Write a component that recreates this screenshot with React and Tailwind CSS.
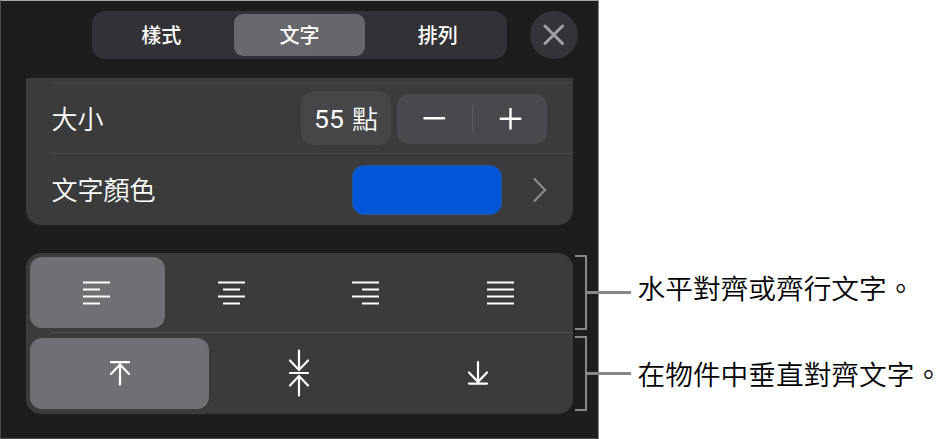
import React from "react";

const tabs = ["樣式", "文字", "排列"];

// x start / x end of each of the four lines
const alignments = [
  { id: "left", lines: [[0, 27], [0, 17], [0, 27], [0, 17]] },
  { id: "center", lines: [[0, 27], [5, 22], [0, 27], [5, 22]] },
  { id: "right", lines: [[0, 27], [10, 27], [0, 27], [10, 27]] },
  { id: "justify", lines: [[0, 27], [0, 27], [0, 27], [0, 27]] },
];

const verticals = [
  { id: "top", path: "M2 13.2H20 M11 15V35.4 M2 25L11 15.5L20 25" },
  {
    id: "middle",
    path: "M2 24H20 M11 1.5V21 M2 11.5L11 21L20 11.5 M11 27V46.5 M2 36.5L11 27L20 36.5",
  },
  { id: "bottom", path: "M2 34.6H20 M11 13V33 M2 23.5L11 32.8L20 23.5" },
];

const AlignIcon = ({ lines }) => (
  <svg className="mr-px" width="27" height="24" viewBox="0 0 27 24" fill="none" stroke="white" strokeWidth="2">
    {lines.map(([from, to], i) => (
      <path key={i} d={`M${from} ${1.5 + i * 7}H${to}`} />
    ))}
  </svg>
);

const Callout = ({ className, children }) => (
  <div className="flex items-center h-[75px]">
    <div className="h-[75px] w-[12px] border-y-[2.5px] border-r-[2.5px] border-[#878787]" />
    <div className="h-[2.5px] w-[44px] bg-[#878787]" />
    <span className={`ml-[6.5px] text-[27.7px] leading-[40px] text-black whitespace-nowrap ${className}`}>
      {children}
    </span>
  </div>
);

const App = () => {
  return (
    <div className="relative w-[947px] h-[439px] overflow-hidden bg-white font-['Noto_Sans_CJK_TC',sans-serif] font-[350]">
      <div className="w-[599px] h-[439px] bg-[#1d1d1e] border border-t-[#a2a7a7] border-l-[#4c4c4d] border-r-[#858585] border-b-[#4c4c4d] text-white">
        {/* Tabs and close button */}
        <div className="flex items-center pl-[91px] pt-[10px]">
          <div className="grid grid-cols-3 items-center w-[415px] h-[48px] rounded-[13px] bg-[#323135]">
            {tabs.map((tab) => (
              <button
                key={tab}
                className={`mx-[3.5px] h-[42px] pb-[2px] text-[20px] font-medium leading-[39px] rounded-[9px] ${
                  tab === "文字" ? "bg-linear-to-r from-[#69686d] to-[#66666b]" : ""
                }`}
              >
                {tab}
              </button>
            ))}
          </div>
          <button className="ml-[23px] flex items-center justify-center size-[48px] rounded-full bg-[#343337]">
            <svg width="22" height="22" viewBox="0 0 22 22" stroke="#a1a0a7" strokeWidth="3" strokeLinecap="round">
              <path d="M2 2L19.5 19.5M19.5 2L2 19.5" />
            </svg>
          </button>
        </div>

        {/* Size and colour */}
        <div className="ml-[25px] mt-[19px] w-[547px] h-[147px] rounded-b-[15px] bg-[#3b3b3c] pt-[4px]">
          <div className="ml-[25px] h-[71px] flex items-center border-t border-[#464647] text-[26px]">
            <span className="flex-1 pl-[0.5px] leading-none">大小</span>
            <div className="flex items-center justify-center gap-[8px] w-[90px] h-[54px] rounded-[13px] bg-[#464648] leading-none">
              <span className="font-[Roboto] font-normal text-[26.5px] pt-[2px]">55</span>
              <span>點</span>
            </div>
            <div className="ml-[6px] mr-[26px] mt-px flex items-center w-[150px] h-[50px] rounded-[12px] bg-[#49484c]">
              <button className="flex-1 flex justify-center">
                <svg width="24" height="24" viewBox="0 0 24 24" stroke="white" strokeWidth="2.4" strokeLinecap="round">
                  <path d="M2.5 11.2H22" />
                </svg>
              </button>
              <span className="w-px h-[28px] bg-[#5b5b5f]" />
              <button className="flex-1 flex justify-center">
                <svg width="24" height="24" viewBox="0 0 24 24" stroke="white" strokeWidth="2.4" strokeLinecap="round">
                  <path d="M2.7 11.8H22.3M12.5 2V21.6" />
                </svg>
              </button>
            </div>
          </div>
          <div className="ml-[25px] h-[72px] flex items-center border-t border-[#4a4a4b] text-[26px]">
            <span className="flex-1 pl-[0.5px] pb-[2px] leading-none">文字顏色</span>
            <span className="w-[150px] h-[50px] rounded-[12px] bg-[#0056d6] border border-[#27579b]" />
            <svg className="ml-[30px] mr-[26px]" width="15" height="26" viewBox="0 0 15 26" fill="none" stroke="#8d8d8e" strokeWidth="2.2" strokeLinecap="round">
              <path d="M2.5 2L13 13L2.5 24" />
            </svg>
          </div>
        </div>

        {/* Text alignment */}
        <div className="ml-[25px] mt-[28px] w-[547px] h-[161px] rounded-[15px] bg-[#3b3b3c] pt-[4px]">
          <div className="flex ml-[4px] w-[538px]">
            {alignments.map(({ id, lines }) => (
              <button
                key={id}
                aria-label={id}
                className={`flex-1 h-[71px] flex items-center justify-center rounded-[12px] ${
                  id === "left" ? "bg-[#707074]" : ""
                }`}
              >
                <AlignIcon lines={lines} />
              </button>
            ))}
          </div>
          <div className="ml-[25px] mt-[4px] h-px bg-[#505051]" />
          <div className="flex ml-[4px] mt-[5px] w-[538px]">
            {verticals.map(({ id, path }) => (
              <button
                key={id}
                aria-label={id}
                className={`flex-1 h-[71px] flex items-center justify-center pb-[2px] rounded-[12px] ${
                  id === "top" ? "bg-[#707074]" : ""
                }`}
              >
                <svg width="22" height="48" viewBox="0 0 22 48" fill="none" stroke="white" strokeWidth="2.2" strokeLinecap="round">
                  <path d={path} />
                </svg>
              </button>
            ))}
          </div>
        </div>
      </div>

      {/* Callouts over the edge of the panel */}
      <div className="absolute left-[575px] top-[255px] flex flex-col gap-[6px]">
        <Callout className="pb-[12px]">水平對齊或齊行文字。</Callout>
        <Callout className="pb-[2px]">在物件中垂直對齊文字。</Callout>
      </div>
    </div>
  );
};

export default App;
